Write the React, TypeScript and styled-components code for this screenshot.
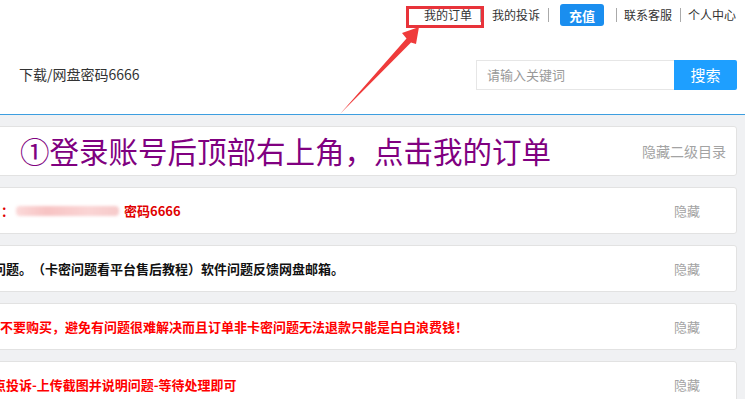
import React from 'react';
import styled, { createGlobalStyle } from 'styled-components';

const GlobalStyle = createGlobalStyle`
	html, body {
		margin: 0;
		padding: 0;
		background: #f0f1f3;
	}
	body {
		font-family: "Noto Sans CJK SC", "Noto Sans", sans-serif;
		color: #333;
		text-spacing-trim: space-all;
	}
`;

const rows = [
	{ color: '#e00000', offset: 0, text: null as string | null },
	{ color: '#111', offset: -8, text: '问题。（卡密问题看平台售后教程）软件问题反馈网盘邮箱。' },
	{ color: '#f00', offset: -1, text: '不要购买，避免有问题很难解决而且订单非卡密问题无法退款只能是白白浪费钱！' },
	{ color: '#f00', offset: -8, text: '点投诉-上传截图并说明问题-等待处理即可' },
];

function App() {
	return (
		<>
			<GlobalStyle />
			<Page>
				<Header>
					<TopNav>
						<NavLink>我的订单</NavLink>
						<Sep $r={11} />
						<NavLink>我的投诉</NavLink>
						<Sep />
						<ChargeBtn>充值</ChargeBtn>
						<Sep />
						<NavLink>联系客服</NavLink>
						<Sep />
						<NavLink>个人中心</NavLink>
					</TopNav>
					<MainRow>
						<SiteTitle>下载/网盘密码6666</SiteTitle>
						<Search>
							<SearchInput placeholder="请输入关键词" />
							<SearchBtn>搜索</SearchBtn>
						</Search>
					</MainRow>
				</Header>
				<Content>
					<Card $height={50}>
						<Title>①登录账号后顶部右上角，点击我的订单</Title>
						<HideLink $size={14} $right={10}>隐藏二级目录</HideLink>
					</Card>
					{rows.map((row, i) => (
						<Card key={i} $height={47}>
							<RowText $color={row.color} $offset={row.offset}>
								{row.text ?? (
									<>
										：<Blurred />密码6666
									</>
								)}
							</RowText>
							<HideLink $size={13} $right={36}>隐藏</HideLink>
						</Card>
					))}
				</Content>
				<Annotation width="745" height="399" viewBox="0 0 745 399">
					<rect x="407.5" y="7.5" width="75" height="19" fill="none" stroke="#e8333a" strokeWidth="3" />
					<polygon
						points="419,27 402,33 406.5,38.5 340,114 411,42.5 416,44"
						fill="#ef3b3b"
					/>
				</Annotation>
			</Page>
		</>
	);
}

const Page = styled.div`
	position: relative;
	width: 745px;
	height: 399px;
	overflow: hidden;
	background: #f0f1f3;
`;

const Header = styled.div`
	background: #fff;
	border-bottom: 1px solid #3d9ee0;
	height: 115px;
	box-sizing: border-box;
`;

const TopNav = styled.div`
	display: flex;
	justify-content: flex-end;
	align-items: center;
	height: 30px;
	padding-right: 9px;
`;

const NavLink = styled.span`
	font-size: 12px;
	color: #333;
	line-height: 1;
`;

const Sep = styled.span<{ $l?: number; $r?: number }>`
	width: 1px;
	height: 14px;
	background: #aaa;
	margin: 0 ${(p) => p.$r ?? 7}px 0 ${(p) => p.$l ?? 8}px;
`;

const ChargeBtn = styled.span`
	display: flex;
	align-items: center;
	justify-content: center;
	width: 44px;
	height: 22px;
	margin: 0 4px;
	border-radius: 3px;
	background: #1a8eef;
	color: #fff;
	font-size: 13px;
	font-weight: 700;
`;

const MainRow = styled.div`
	display: flex;
	justify-content: space-between;
	align-items: center;
	padding: 0 8px 0 19px;
	height: 84px;
	margin-top: -1px;
`;

const SiteTitle = styled.div`
	font-size: 14px;
	color: #333;
	margin-top: 5px;
`;

const Search = styled.div`
	display: flex;
	align-items: stretch;
	height: 30px;
	margin-top: 7px;
`;

const SearchInput = styled.input`
	width: 198px;
	box-sizing: border-box;
	border: 1px solid #e6e6e6;
	border-right: none;
	padding: 0 10px;
	font-family: "Noto Sans CJK SC", sans-serif;
	font-size: 13px;
	outline: none;
	&::placeholder {
		color: #999;
	}
`;

const SearchBtn = styled.button`
	width: 63px;
	border: none;
	border-radius: 0 2px 2px 0;
	background: #1e9fff;
	color: #fff;
	font-family: "Noto Sans CJK SC", sans-serif;
	font-size: 15px;
`;

const Content = styled.div`
	display: flex;
	flex-direction: column;
	gap: 11px;
	padding: 11px 8px 0 0;
	margin-left: -20px;
`;

const Card = styled.div<{ $height: number }>`
	display: flex;
	align-items: center;
	justify-content: space-between;
	height: ${(p) => p.$height}px;
	box-sizing: border-box;
	padding-left: 20px;
	background: #fff;
	border: 1px solid #e2e2e2;
	border-radius: 3px;
`;

const Title = styled.div`
	font-size: 29.5px;
	line-height: 1;
	color: #800080;
	margin-left: 19px;
	white-space: nowrap;
`;

const RowText = styled.div<{ $color: string; $offset: number }>`
	display: flex;
	align-items: center;
	margin-left: ${(p) => p.$offset}px;
	color: ${(p) => p.$color};
	font-size: 13px;
	font-weight: 700;
	white-space: nowrap;
`;

const Blurred = styled.span`
	display: inline-block;
	width: 103px;
	height: 10px;
	margin: 0 5px 0 2px;
	border-radius: 4px;
	background: linear-gradient(90deg, #fbd9d9, #f7c3c3 30%, #fad4d4 70%, #f6caca);
	filter: blur(1.5px);
`;

const HideLink = styled.span<{ $size: number; $right: number }>`
	font-size: ${(p) => p.$size}px;
	color: #a3a3a3;
	margin-right: ${(p) => p.$right}px;
	white-space: nowrap;
`;

const Annotation = styled.svg`
	position: absolute;
	left: 0;
	top: 0;
	pointer-events: none;
`;

export default App;
